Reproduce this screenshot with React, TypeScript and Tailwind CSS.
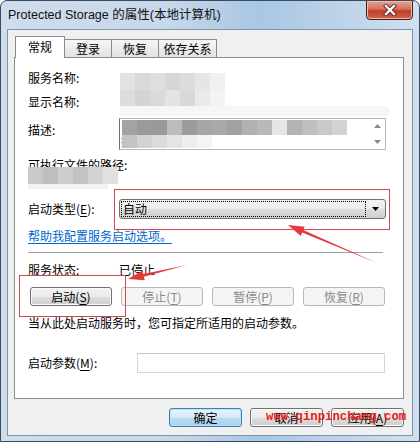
import clsx from "clsx";

const nameBlur = [
  ["bg-[#e2e2e2]", "bg-[#d9d9d9]", "bg-[#dedede]", "bg-[#d6d6d6]", "bg-[#dcdcdc]", "bg-[#e6e6e6]", "bg-[#f0f0f0]"],
  ["bg-[#dddddd]", "bg-[#d4d4d4]", "bg-[#dadada]", "bg-[#e3e3e3]", "bg-[#d8d8d8]", "bg-[#eaeaea]", "bg-[#f3f3f3]"],
];

const descBlur = [
  [
    "bg-[#a3a3a3]", "bg-[#9a9a9a]", "bg-[#999999]", "bg-[#bcbcbc]", "bg-[#9c9c9c]", "bg-[#a6a6a6]",
    "bg-[#a9a9a9]", "bg-[#a1a1a1]", "bg-[#b1b1b1]", "bg-[#b9b9b9]", "bg-[#e6e6e6]", "bg-[#b4b4b4]",
    "bg-[#bfbfbf]", "bg-[#c9c9c9]", "bg-[#d3d3d3]", "bg-transparent",
  ],
  [
    "bg-[#c4c4c4]", "bg-[#d2d2d2]", "bg-[#dbdbdb]", "bg-[#e4e4e4]", "bg-[#eeeeee]", "bg-[#f4f4f4]",
    "bg-transparent", "bg-transparent", "bg-transparent", "bg-transparent", "bg-transparent", "bg-transparent",
    "bg-transparent", "bg-transparent", "bg-transparent", "bg-transparent",
  ],
];

const pathBlur = [
  ["bg-[#c9c9c9]", "bg-[#bebebe]", "bg-[#cdcdcd]", "bg-[#c3c3c3]", "bg-[#d3d3d3]", "bg-[#e0e0e0]"],
];

function Mosaic({ rows, cell, className }: { rows: string[][]; cell: string[]; className: string }) {
  return (
    <div className={clsx("absolute flex flex-col", className)}>
      {rows.map((row, i) => (
        <div key={i} className="flex">
          {row.map((c, j) => (
            <div key={j} className={clsx("w-[15px]", cell[i], c)} />
          ))}
        </div>
      ))}
    </div>
  );
}

function Key({ k }: { k: string }) {
  return (
    <>
      (<span className="underline underline-offset-2">{k}</span>)
    </>
  );
}

function WinButton({
  children,
  disabled,
  primary,
  className,
}: {
  children: React.ReactNode;
  disabled?: boolean;
  primary?: boolean;
  className?: string;
}) {
  return (
    <div
      className={clsx(
        "h-[19px] flex items-center justify-center rounded-[3px] border leading-none",
        disabled
          ? "border-[#b5b9bc] bg-[#f4f4f4] text-[#8a8a8a]"
          : primary
            ? "border-[#3c7fb1] bg-[linear-gradient(#e6f2fa,#d6e9f6_50%,#bcdcf1_50%,#a9d2ee)] shadow-[inset_0_0_0_1px_#b7e0f9]"
            : "border-[#707070] bg-[linear-gradient(#f2f2f2,#ebebeb_50%,#dddddd_50%,#cfcfcf)] shadow-[inset_0_0_0_1px_#fbfbfb]",
        className
      )}
    >
      {children}
    </div>
  );
}

export default function App() {
  return (
    <div className="relative w-[420px] h-[442px] overflow-hidden rounded-t-[7px] border border-[#3b4a5c] bg-[linear-gradient(90deg,#cfdded,#c6d8ea_40%,#a9c6e3_62%,#bcd2e9_80%,#d0e0f0)] font-['Noto_Sans_CJK_SC',sans-serif] text-[12px] text-black">
      {/* title bar */}
      <div className="h-[28px] flex items-center pl-[7px]">
        <span className="font-['Liberation_Sans','Noto_Sans_CJK_SC',sans-serif] text-[12.5px] leading-none text-[#111]">
          Protected Storage 的属性(本地计算机)
        </span>
      </div>
      <div className="absolute right-[6px] top-[-1px] w-[47px] h-[20px] rounded-b-[4px] border border-[#4a1d14] bg-[linear-gradient(#e5a595,#d36f5a_45%,#c23c24_55%,#d0654c)] shadow-[inset_0_0_0_1px_#eebbaa] flex items-center justify-center">
        <svg width="14" height="12" viewBox="0 0 14 12">
          <path d="M3 2 L11 10 M11 2 L3 10" stroke="#5a2318" strokeWidth="4.2" strokeLinecap="square" />
          <path d="M3 2 L11 10 M11 2 L3 10" stroke="#ffffff" strokeWidth="2.4" strokeLinecap="square" />
        </svg>
      </div>

      {/* client area */}
      <div className="ml-[6px] w-[406px] h-[407px] border border-[#7f95ab] bg-[#f0f0f0]">
        <div className="ml-[6px] mt-[6px] w-[390px]">
          {/* tabs */}
          <div className="flex items-end h-[21px] pl-[1px]">
            <div className="relative z-10 -mb-px w-[50px] h-[22px] border border-b-0 border-[#898c95] bg-white flex items-center justify-center pb-[2px]">
              常规
            </div>
            <div className="w-[47px] h-[18px] border border-b-0 border-l-0 border-[#898c95] bg-[linear-gradient(#f6f6f6,#e2e2e2)] flex items-center justify-center">
              登录
            </div>
            <div className="w-[47px] h-[18px] border border-b-0 border-l-0 border-[#898c95] bg-[linear-gradient(#f6f6f6,#e2e2e2)] flex items-center justify-center">
              恢复
            </div>
            <div className="w-[58px] h-[18px] border border-b-0 border-l-0 border-[#898c95] bg-[linear-gradient(#f6f6f6,#e2e2e2)] flex items-center justify-center">
              依存关系
            </div>
          </div>

          {/* panel */}
          <div className="relative h-[342px] border border-[#898c95] bg-white pl-[13px] flex flex-col">
            <div className="mt-[12px] h-[16px] flex items-center leading-[16px]">服务名称:</div>
            <div className="mt-[8px] h-[16px] flex items-center leading-[16px]">显示名称:</div>

            <div className="mt-[8px] flex">
              <div className="w-[91px] pt-[4px] leading-[16px]">描述:</div>
              <div className="relative w-[267px] h-[32px] border border-[#b6b9bd] border-l-[#6e6e6e] bg-white flex">
                <div className="flex-1 pl-[1px] leading-[15px] text-[11px]">
                  <div>了</div>
                  <div>控</div>
                </div>
                <div className="w-[16px] flex flex-col items-center justify-between py-[5px]">
                  <svg width="7" height="4" viewBox="0 0 7 4">
                    <path d="M0 4 L3.5 0 L7 4 Z" fill="#8a8a8a" />
                  </svg>
                  <svg width="7" height="4" viewBox="0 0 7 4">
                    <path d="M0 0 L3.5 4 L7 0 Z" fill="#8a8a8a" />
                  </svg>
                </div>
              </div>
            </div>

            <div className="mt-[7px] h-[16px] flex items-center leading-[16px]">可执行文件的路径:</div>

            <div className="mt-[26px] h-[20px] flex items-center">
              <div className="w-[91px] leading-[16px]">
                启动类型<Key k="E" />:
              </div>
              <div className="w-[267px] h-[20px] rounded-[3px] border border-[#707070] bg-[linear-gradient(#f2f2f2,#ebebeb_50%,#dddddd_50%,#cfcfcf)] flex p-[1px]">
                <div className="w-[245px] h-full border border-dotted border-black flex items-center pl-[1px] leading-none">
                  自动
                </div>
                <div className="flex-1 flex items-center justify-center">
                  <svg width="7" height="4" viewBox="0 0 7 4">
                    <path d="M0 0 L7 0 L3.5 4 Z" fill="#000" />
                  </svg>
                </div>
              </div>
            </div>

            <div className="mt-[9px] h-[16px] leading-[16px] text-[#0066cc] underline underline-offset-2">
              帮助我配置服务启动选项。
            </div>

            <div className="mt-[8px] w-[355px] h-px bg-[#a0a0a0]" />

            <div className="mt-[9px] h-[16px] flex items-center leading-[16px]">
              <div className="w-[91px]">服务状态:</div>
              <div>已停止</div>
            </div>

            <div className="mt-[9px] pl-[2px] flex gap-[9px]">
              <WinButton className="w-[82px]">
                启动<Key k="S" />
              </WinButton>
              <WinButton disabled className="w-[82px]">
                停止<Key k="T" />
              </WinButton>
              <WinButton disabled className="w-[82px]">
                暂停<Key k="P" />
              </WinButton>
              <WinButton disabled className="w-[82px]">
                恢复<Key k="R" />
              </WinButton>
            </div>

            <div className="mt-[9px] h-[16px] leading-[16px]">当从此处启动服务时，您可指定所适用的启动参数。</div>

            <div className="mt-[22px] h-[20px] flex items-center">
              <div className="w-[109px] leading-[16px]">
                启动参数<Key k="M" />:
              </div>
              <div className="w-[248px] h-[20px] border border-[#d5d5d5] border-t-[#c4c4c4] bg-white" />
            </div>

            {/* redacted values */}
            <Mosaic rows={nameBlur} cell={["h-[17px]", "h-[16px]"]} className="left-[105px] top-[15px]" />
            <div className="absolute left-[105px] top-[48px] w-[270px] h-[10px] rounded-r-[6px] bg-[#f6f6f6]" />
            <Mosaic rows={descBlur} cell={["h-[15px]", "h-[13px]"]} className="left-[107px] top-[62px]" />
            <Mosaic rows={pathBlur} cell={["h-[17px]"]} className="left-[13px] top-[109px]" />
            <div className="absolute left-[13px] top-[126px] w-[80px] h-[5px] bg-[#f2f2f2]" />
          </div>

          {/* dialog buttons */}
          <div className="mt-[9px] flex justify-end gap-[8px]">
            <WinButton primary className="w-[73px]">
              确定
            </WinButton>
            <WinButton className="w-[73px]">取消</WinButton>
            <WinButton className="w-[73px]">
              应用<Key k="A" />
            </WinButton>
          </div>
        </div>
      </div>

      {/* annotations */}
      <svg className="absolute left-[-1px] top-[-1px] pointer-events-none" width="420" height="442" viewBox="0 0 420 442">
        <rect x="114.5" y="189.5" width="275" height="40" fill="none" stroke="#d8444c" strokeWidth="1" />
        <rect x="19.5" y="275.5" width="106" height="41" fill="none" stroke="#d8444c" strokeWidth="1" />
        <polygon points="288,225 300.7,235.9 302.2,232.6 377,263 303.2,230 304.7,226.7" fill="#e5393b" />
        <polygon points="128,279 144.8,280.2 143.9,276.7 187,265 143.3,273.9 142.4,270.4" fill="#e5393b" />
      </svg>
      <div className="absolute left-[265px] top-[410px] font-['Liberation_Mono',monospace] font-bold text-[12.3px] leading-none text-[#e5221b]">
        www.qinpinchang.com
      </div>
    </div>
  );
}
